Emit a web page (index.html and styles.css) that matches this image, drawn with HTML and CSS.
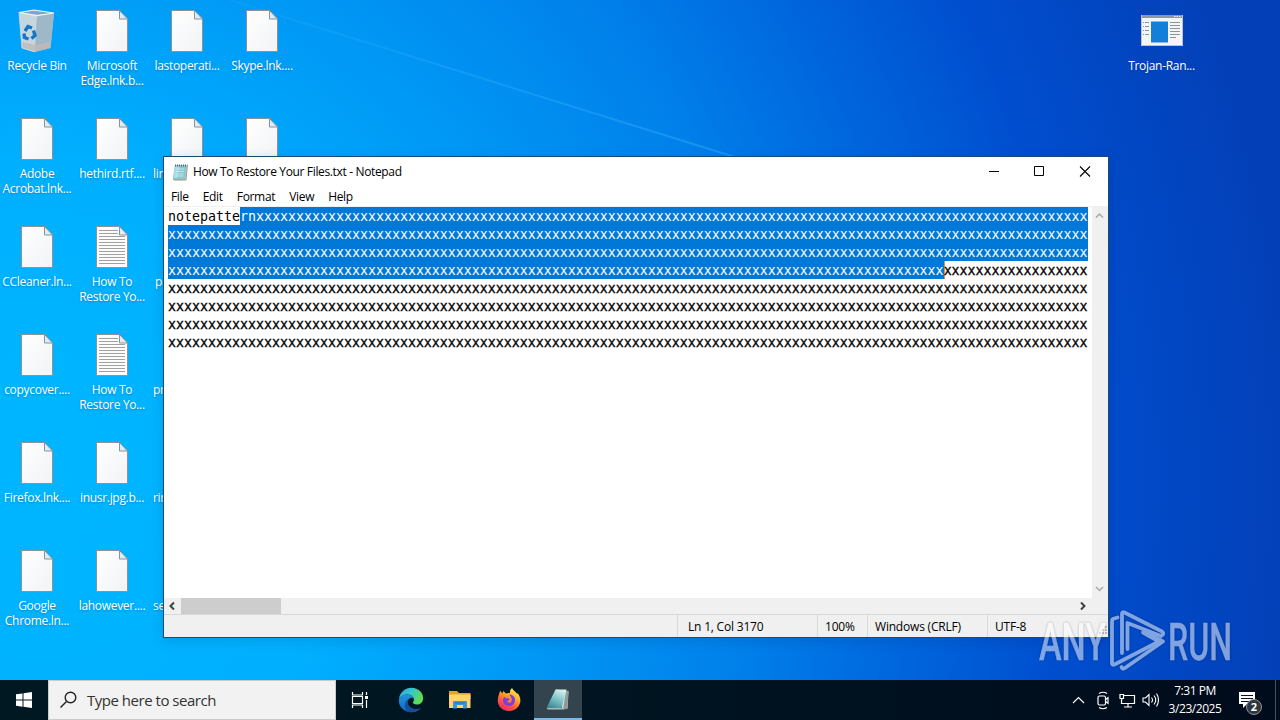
FILE: index.html
```html
<!DOCTYPE html>
<html lang="en">
<head>
<meta charset="utf-8">
<title>Desktop</title>
<link rel="stylesheet" href="styles.css">
</head>
<body>
<svg class="defs" width="0" height="0">
  <defs>
    <linearGradient id="paper" x1="0" y1="0" x2="1" y2="1"><stop offset="0" stop-color="#fff"/><stop offset="1" stop-color="#f1f3f5"/></linearGradient>
    <symbol id="file" viewBox="0 0 32 42">
      <path d="M.5.5h23l8 8.5v32.500H.5z" fill="url(#paper)" stroke="#8d9296"/>
      <path d="M23.500.5v8.500h8z" fill="#d9eefa" stroke="#8d9296"/>
    </symbol>
    <symbol id="textfile" viewBox="0 0 32 42">
      <path d="M.5.5h23l8 8.5v32.500H.5z" fill="#fcfcfc" stroke="#8d9296"/>
      <path d="M3 4.500h19M3 7.500h19M3 10.500h26M3 13.500h26M3 16.500h26M3 19.500h26M3 22.500h26M3 25.500h26M3 28.500h26M3 31.500h26M3 34.500h26M3 37.500h26" stroke="#a0a0a0"/>
      <path d="M23.500.5v8.500h8z" fill="#e3eef6" stroke="#8d9296"/>
    </symbol>
  </defs>
</svg>
<main class="desktop">
  <svg class="rays" viewBox="0 0 1280 680" width="1280" height="680">
    <defs>
      <linearGradient id="ray" x1="230" y1="0" x2="735" y2="157" gradientUnits="userSpaceOnUse"><stop offset="0" stop-color="#4dbcff" stop-opacity=".1"/><stop offset=".5" stop-color="#4dbcff" stop-opacity=".25"/><stop offset="1" stop-color="#3fb0ff" stop-opacity=".4"/></linearGradient>
    </defs>
    <path d="M230 0L735 157" stroke="url(#ray)" stroke-width="2"/>
  </svg>
  <section class="icons">
    <div class="cell">
      <svg class="ico bin" viewBox="0 0 40 44" width="40" height="44">
        <path d="M2 3.500L17 1l20 3-3.500 35L18 43 5 39z" fill="#a9c3d3"/>
        <path d="M2 3.500L20 6.500 18 43 5 39z" fill="#c6d6df"/>
        <path d="M20 6.500L37 4l-3.500 35L18 43z" fill="#9eb8c8"/>
        <path d="M4 3.600L17 1.800 35 4 20 6z" fill="#7fa9c2"/>
        <path d="M4.500 33L18 36l15.500-3.500-.5 6L18 42.500 5.500 38.500z" fill="#c3b9b6" opacity=".8"/>
        <path d="M2 3.500L17 1l20 3-17 2.700z" fill="none" stroke="#e8f5fb" stroke-width="1.200"/>
        <path d="M2 3.500L5 39l13 4" fill="none" stroke="#b8d7e8"/>
        <g fill="none" stroke="#1674c9" stroke-width="3.400"><path d="M8 22l3-4.500 4 1.500"/><path d="M16.500 21.500l1.500 5-3.500 3"/><path d="M11.500 30l-4-1.500-.5-4"/></g>
      </svg>
      <p>Recycle Bin</p>
    </div>
    <div class="cell"><svg class="ico" width="32" height="42"><use href="#file"/></svg><p>Microsoft<br>Edge.lnk.b...</p></div>
    <div class="cell"><svg class="ico" width="32" height="42"><use href="#file"/></svg><p>lastoperati...</p></div>
    <div class="cell"><svg class="ico" width="32" height="42"><use href="#file"/></svg><p>Skype.lnk....</p></div>

    <div class="cell"><svg class="ico" width="32" height="42"><use href="#file"/></svg><p>Adobe<br>Acrobat.lnk...</p></div>
    <div class="cell"><svg class="ico" width="32" height="42"><use href="#file"/></svg><p>hethird.rtf....</p></div>
    <div class="cell"><svg class="ico" width="32" height="42"><use href="#file"/></svg><p class="cut">lin</p></div>
    <div class="cell"><svg class="ico" width="32" height="42"><use href="#file"/></svg></div>

    <div class="cell"><svg class="ico" width="32" height="42"><use href="#file"/></svg><p>CCleaner.ln...</p></div>
    <div class="cell"><svg class="ico" width="32" height="42"><use href="#textfile"/></svg><p>How To<br>Restore Yo...</p></div>
    <div class="cell"><div class="ico blank"></div><p class="cut in">pr</p></div>
    <div class="cell"></div>

    <div class="cell"><svg class="ico" width="32" height="42"><use href="#file"/></svg><p>copycover....</p></div>
    <div class="cell"><svg class="ico" width="32" height="42"><use href="#textfile"/></svg><p>How To<br>Restore Yo...</p></div>
    <div class="cell"><div class="ico blank"></div><p class="cut">pr</p></div>
    <div class="cell"></div>

    <div class="cell"><svg class="ico" width="32" height="42"><use href="#file"/></svg><p>Firefox.lnk....</p></div>
    <div class="cell"><svg class="ico" width="32" height="42"><use href="#file"/></svg><p>inusr.jpg.b...</p></div>
    <div class="cell"><div class="ico blank"></div><p class="cut">rin</p></div>
    <div class="cell"></div>

    <div class="cell"><svg class="ico" width="32" height="42"><use href="#file"/></svg><p>Google<br>Chrome.ln...</p></div>
    <div class="cell"><svg class="ico" width="32" height="42"><use href="#file"/></svg><p>lahowever....</p></div>
    <div class="cell"><div class="ico blank"></div><p class="cut">se</p></div>
    <div class="cell"></div>
  </section>
  <section class="icons right">
    <div class="cell">
      <svg class="ico" viewBox="0 0 42 42" width="42" height="42">
        <path d="M0 5h42v31H0z" fill="#f4f5f5"/><path d="M0 5h42v3H0z" fill="#8e989e"/>
        <path d="M33 6.500h1.500m1 0h1.500m1 0h1.500" stroke="#eee"/>
        <path d="M10 11.500h17v21H10z" fill="#1280d8"/>
        <path d="M4 12.500h4M4 16.500h4M4 20.500h4M4 24.500h4" stroke="#8d9499"/><path d="M2 12.500h1M2 16.500h1M2 20.500h1M2 24.500h1" stroke="#55a0d8"/>
        <path d="M29 12.500h10M29 15.500h10M29 18.500h10M29 21.500h10M29 24.500h10M29 27.500h6" stroke="#8d9499"/>
        <path d="M.5 5v30.500h41V5" fill="none" stroke="#b9c4cc"/>
      </svg>
      <p>Trojan-Ran...</p>
    </div>
  </section>

  <section class="window">
    <header class="titlebar">
      <svg width="16" height="18" viewBox="0 0 16 18">
        <path d="M3 2h12l-1.500 15H.8z" fill="#83bcc9"/><path d="M3 2.500h11.500L13 15.500H1.300z" fill="#a5dbe3"/><path d="M8 3h6.500L13 15.500H5z" fill="#8ac7d2"/>
        <path d="M4.500 6h8M4 8.500h8M3.700 11h8M3.400 13h8" stroke="#d2f0f3" stroke-width=".7"/>
        <path d="M3 2.500h12.500" stroke="#516b72" stroke-width="2" stroke-dasharray="1 1"/><path d="M15.300 3L14 17H2" fill="none" stroke="#a69a83"/>
      </svg>
      <h1>How To Restore Your Files.txt - Notepad</h1>
      <svg class="controls" width="138" height="30" viewBox="0 0 138 30" fill="none" stroke="#000"><path d="M19 14.500h10"/><path d="M64.500 9.500h9v9h-9z"/><path d="M110 9.500l10 10m0-10l-10 10" stroke-width="1.100"/></svg>
    </header>
    <nav class="menu"><span>File</span><span>Edit</span><span>Format</span><span>View</span><span>Help</span></nav>
    <div class="editor">
      <div class="text">
        <div>notepatte<mark>rnxxxxxxxxxxxxxxxxxxxxxxxxxxxxxxxxxxxxxxxxxxxxxxxxxxxxxxxxxxxxxxxxxxxxxxxxxxxxxxxxxxxxxxxxxxxxxxxxxxxxxxxx</mark></div>
        <div><mark>xxxxxxxxxxxxxxxxxxxxxxxxxxxxxxxxxxxxxxxxxxxxxxxxxxxxxxxxxxxxxxxxxxxxxxxxxxxxxxxxxxxxxxxxxxxxxxxxxxxxxxxxxxxxxxxxxxx</mark></div>
        <div><mark>xxxxxxxxxxxxxxxxxxxxxxxxxxxxxxxxxxxxxxxxxxxxxxxxxxxxxxxxxxxxxxxxxxxxxxxxxxxxxxxxxxxxxxxxxxxxxxxxxxxxxxxxxxxxxxxxxxx</mark></div>
        <div><mark class="end">xxxxxxxxxxxxxxxxxxxxxxxxxxxxxxxxxxxxxxxxxxxxxxxxxxxxxxxxxxxxxxxxxxxxxxxxxxxxxxxxxxxxxxxxxxxxxxxxx</mark><b>xxxxxxxxxxxxxxxxxx</b></div>
        <div><b>xxxxxxxxxxxxxxxxxxxxxxxxxxxxxxxxxxxxxxxxxxxxxxxxxxxxxxxxxxxxxxxxxxxxxxxxxxxxxxxxxxxxxxxxxxxxxxxxxxxxxxxxxxxxxxxxxxx</b></div>
        <div><b>xxxxxxxxxxxxxxxxxxxxxxxxxxxxxxxxxxxxxxxxxxxxxxxxxxxxxxxxxxxxxxxxxxxxxxxxxxxxxxxxxxxxxxxxxxxxxxxxxxxxxxxxxxxxxxxxxxx</b></div>
        <div><b>xxxxxxxxxxxxxxxxxxxxxxxxxxxxxxxxxxxxxxxxxxxxxxxxxxxxxxxxxxxxxxxxxxxxxxxxxxxxxxxxxxxxxxxxxxxxxxxxxxxxxxxxxxxxxxxxxxx</b></div>
        <div><b>xxxxxxxxxxxxxxxxxxxxxxxxxxxxxxxxxxxxxxxxxxxxxxxxxxxxxxxxxxxxxxxxxxxxxxxxxxxxxxxxxxxxxxxxxxxxxxxxxxxxxxxxxxxxxxxxxxx</b></div>
      </div>
      <div class="vscroll">
        <svg width="15" height="17" fill="none" stroke="#a8a8a8" stroke-width="1.500"><path d="M4 10.500l3.500-3.500 3.500 3.500"/></svg>
        <svg width="15" height="17" fill="none" stroke="#a8a8a8" stroke-width="1.500"><path d="M4 6l3.500 3.500L11 6"/></svg>
      </div>
    </div>
    <div class="hscroll">
      <svg width="17" height="16" fill="none" stroke="#404040" stroke-width="2"><path d="M10 4.500L6.500 8l3.500 3.500"/></svg>
      <i class="thumb"></i>
      <svg class="next" width="17" height="16" fill="none" stroke="#404040" stroke-width="2"><path d="M7 4.500L10.500 8 7 11.500"/></svg>
    </div>
    <footer class="status"><span class="pos">Ln 1, Col 3170</span><span class="zoom">100%</span><span class="eol">Windows (CRLF)</span><span class="enc">UTF-8</span>
      <svg width="10" height="12" fill="#b5b5b5"><path d="M7 1h2v2H7zM4 4h2v2H4zM7 4h2v2H7zM1 7h2v2H1zM4 7h2v2H4zM7 7h2v2H7z"/></svg>
    </footer>
  </section>

  <svg class="watermark" width="204" height="66" viewBox="0 0 204 66">
    <text x="2" y="50.500" textLength="67" lengthAdjust="spacingAndGlyphs">ANY</text>
    <text x="131" y="50.500" textLength="64" lengthAdjust="spacingAndGlyphs">RUN</text>
    <g fill="none" stroke-width="3.800" stroke-linejoin="round" stroke-linecap="round">
      <path d="M80.500 8.500l-4 1.200q-1.500.5-1.500 2.500V54q0 2.500 2.500 1.500L122 32.500 106 23.500"/>
      <path d="M85 44V5q0-2.500 2.500-1.500L125 22.500q3 2.500-1 4.500L90.500 14V40"/>
      <path d="M110 24l16 8.500L88 59q-3 2-3.500-1"/>
    </g>
  </svg>
</main>
<footer class="taskbar">
  <div class="start"><svg width="16" height="16" fill="#fff"><path d="M0 2.300L6.500 1.400V7.600H0zM7.500 1.200L16 0v7.600H7.500zM0 8.500h6.500v6.200L0 13.800zM7.500 8.500H16V16l-8.500-1.200z"/></svg></div>
  <div class="search"><svg width="18" height="18" fill="none" stroke="#222" stroke-width="1.400"><circle cx="10.500" cy="6.500" r="5.300"/><path d="M6.500 10.500L.5 16.500"/></svg><span>Type here to search</span></div>
  <div class="task view"><svg width="18" height="18" fill="none" stroke="#fff" stroke-width="1.200"><path d="M1.500 1v3h10V1M1.500 5.500h10v7h-10zM1.500 17v-3h10v3M15.500 1v3M15.500 9v8"/><path d="M14 5h3v3h-3z" fill="#fff" stroke="none"/></svg></div>
  <div class="task"><svg width="26" height="26" viewBox="0 0 24 24">
    <defs><linearGradient id="e1" x1="0" y1="0" x2="1" y2=".4"><stop offset="0" stop-color="#2aa8e0"/><stop offset=".5" stop-color="#34c6d0"/><stop offset="1" stop-color="#5fdc50"/></linearGradient><linearGradient id="e2" x1="0" y1="0" x2="0" y2="1"><stop offset="0" stop-color="#1c95de"/><stop offset="1" stop-color="#1565c0"/></linearGradient></defs>
    <path d="M.8 12C1.500 4.500 7 .8 12.300.8 19 .8 23.200 5.500 23.200 10.500c0 3.400-2.700 5.600-5.800 5.600-2.600 0-3.700-1-3.700-1.700 0-.6 1-1 1-2.600C14.700 9 12 7 8.500 7 4.500 7 1.800 9.300.8 12z" fill="url(#e1)"/>
    <path d="M.8 12C1.800 9 4.700 7 8.500 7c3.200 0 5.600 1.700 6.100 3.900-.8-1-2.200-1.300-3.600-.6-2.600 1.300-2.800 5.200-.4 7.800 2.600 2.800 7 3.200 10.400 1-2 2.800-5.200 4.200-8.700 4.200C5.500 23.300.3 18 .8 12z" fill="url(#e2)"/>
    <path d="M9.700 11.300c-4 2-4.500 7.500-1 11.500 5 1.300 9.600-.5 12.300-3.700-3.400 2.200-7.800 1.800-10.400-1-1.800-2-2.200-4.700-.9-6.800z" fill="#124f9e"/>
  </svg></div>
  <div class="task"><svg width="22" height="20" viewBox="0 0 22 20"><path d="M0 1h8l2 2h11.500v6H0z" fill="#e8a21c"/><path d="M0 4.500h21.500V18H0z" fill="#fcd669"/><path d="M4 18.500V12q0-1 1-1h12q1 0 1 1v6.500h-4V15H8v3.500z" fill="#3a96dd"/><path d="M6 13h10" stroke="#2573b8"/></svg></div>
  <div class="task"><svg width="24" height="24" viewBox="0 0 24 24">
    <defs><linearGradient id="f1" x1=".8" y1="0" x2=".25" y2="1"><stop offset="0" stop-color="#fff24a"/><stop offset=".35" stop-color="#ffb02a"/><stop offset=".65" stop-color="#ff5b36"/><stop offset="1" stop-color="#ee2470"/></linearGradient></defs>
    <path d="M1.500 8C2 5.500 3 4 3.300 2.800l2 2.700 1-2.500L9 5.500c1.500-.7 3-.7 4-.4-.4-2 .6-4 2.200-5 .5 2.500 3.800 3.500 5 6 .2-.4.200-.9.100-1.300C24 9 24.500 14.500 21 19c-4 5-12 5.600-17 1C.7 17 0 12 1.500 8z" fill="url(#f1)"/>
    <path d="M12 6.500c4 0 6 2.500 6 5.700 0 3.400-2.600 5.800-6 5.800-3.300 0-6-2.400-6-5.700 0-1.500.6-2.500 1.400-3.300.8 1 2 1.200 3 1.200 1 0 2 .2 2.300.8-.2 1-2 1.500-2.500 2.300-.2 1.200 1.400 2 3 1.400 2-1 2.500-4.200-1.200-8.200z" fill="#7b3fe0"/>
  </svg></div>
  <div class="task active"><svg width="24" height="23" viewBox="0 0 24 23"><defs><linearGradient id="np" x1=".7" y1="0" x2=".2" y2="1"><stop offset="0" stop-color="#d5f0ef"/><stop offset=".6" stop-color="#6db7be"/><stop offset="1" stop-color="#3c848f"/></linearGradient></defs><path d="M10 1.500L22.500 3l-1 17.500-5 1z" fill="#d4dbda"/><path d="M20 3l2.500.4-1 17-4.500 1z" fill="#8f9b99"/><path d="M9.500 1.500h11L15.500 20H.5z" fill="url(#np)"/><path d="M.5 20h15l1 1.500H2z" fill="#a9bcbd"/></svg></div>
  <div class="tray">
    <svg width="88" height="24" viewBox="0 0 88 24" fill="none" stroke="#fff" stroke-width="1.200">
      <path d="M2 15l5.500-5.500L13 15"/>
      <rect x="27" y="8" width="7.500" height="9" rx="1.500"/><path d="M34.500 11.500L37 9.700v5.600l-2.500-1.800M28 5.500q4-2.500 8 0M28 19.500q4 2.500 8 0"/>
      <path d="M53 7.500h10.500v8H50.500v-4M57 15.500v3.500M53 19h8M49 6.500h3.500v4H49zM50.700 10.500v2"/>
      <path d="M72 10h2.500L78 6.500v11L74.500 14H72zM80.500 9.500q2 2.500 0 5M83 7.500q3.500 4.500 0 9M85.500 5.500q4 6.500 0 13" stroke-width="1.100"/>
    </svg>
    <div class="clock"><span>7:31 PM</span><span>3/23/2025</span></div>
    <div class="notice"><svg width="18" height="18"><path d="M1 1h16v12h-8l-4 4v-4H1z" fill="#fff"/><path d="M3 4.500h12M3 7.500h12M3 10.500h8" stroke="#06121f"/></svg><b>2</b></div>
    <i class="peek"></i>
  </div>
</footer>
</body>
</html>
```
FILE: styles.css
```css
* { box-sizing: border-box; }
body { margin: 0; width: 1280px; height: 720px; overflow: hidden; display: flex; flex-direction: column; font: 12px/15px "Open Sans", "Noto Sans", sans-serif; color: #000; }
p, h1 { margin: 0; font: inherit; }
svg { display: block; flex: none; }
.defs { position: absolute; }
.desktop { position: relative; height: 680px; display: flex; justify-content: space-between;
  background: radial-gradient(ellipse 1200px 1250px at 40px 480px, #00b6ff 0%, #00b0ff 25%, #009af6 42%, #0080ea 60%, #0068de 72%, #004ecf 86%, #0340b8 104%); }
.rays { position: absolute; left: 0; top: 0; }
.icons { display: grid; grid-template-columns: repeat(4, 75px); grid-auto-rows: 108px; position: relative; align-content: start; height: 680px; }
.icons.right { grid-template-columns: 75px; margin-right: 81px; }
.cell { display: flex; flex-direction: column; align-items: center; padding: 10px 1px 0 0; }
.right .cell { padding-right: 0; }
.ico { height: 42px; }
.bin { height: 44px; margin: -1px 0 -1px; }
.blank { width: 32px; }
.cell p { margin-top: 6px; text-align: center; color: #fff; white-space: nowrap; letter-spacing: -.3px; text-shadow: 0 1px 2px rgba(0,50,110,.35); }
.cell p.cut { align-self: flex-start; padding-left: 3px; }
.cell p.in { padding-left: 5px; }

.window { position: absolute; left: 163px; top: 156px; width: 946px; height: 482px; border: 1px solid #1c4b70; background: #fff; display: flex; flex-direction: column; box-shadow: 0 3px 12px rgba(0,20,80,.15); }
.titlebar { height: 29px; display: flex; align-items: center; padding-left: 8px; }
.titlebar h1 { margin-left: 5px; letter-spacing: -.35px; }
.controls { margin-left: auto; }
.menu { height: 21px; display: flex; gap: 14px; padding: 3px 0 0 7px; letter-spacing: -.32px; border-bottom: 1px solid #f0f0f0; }
.editor { height: 391px; display: flex; justify-content: space-between; }
.text { width: 924px; padding: 0 0 0 4px; font: 13.290px/19px "DejaVu Sans Mono", monospace; }
.text div { height: 18px; width: 920px; overflow: hidden; display: flex; white-space: pre; }
.text mark { background: #0078d7; color: #fff; height: 18px; }
.text b { font-weight: normal; -webkit-text-stroke: .3px #000; }
.text .end { border-right: 1px solid #f08a3c; margin-right: -1px; }
.vscroll { width: 16px; background: #f0f0f0; display: flex; flex-direction: column; justify-content: space-between; }
.hscroll { height: 16px; background: #f0f0f0; display: flex; }
.thumb { width: 100px; background: #cdcdcd; }
.next { margin-left: auto; margin-right: 17px; }
.status { flex: 1; border-top: 1px solid #d9d9d9; background: #f0f0f0; display: flex; align-items: stretch; padding-left: 513px; line-height: 24px; height: 23px; letter-spacing: -.2px; }
.status span { border-left: 1px solid #d9d9d9; padding-left: 7px; white-space: nowrap; }
.status .pos { width: 140px; padding-left: 10px; }
.status .zoom { width: 50px; }
.status .eol { width: 120px; }
.status .enc { flex: 1; }
.status svg { align-self: flex-end; }

.watermark { position: absolute; left: 1037px; top: 609px; opacity: .5; filter: drop-shadow(0 0 1px rgba(0,0,0,.55)); overflow: visible; }
.watermark text { font: 500 51px "Roboto", sans-serif; fill: #fff; stroke: #fff; stroke-width: .3px; }
.watermark g { stroke: #fff; }

.taskbar { height: 40px; display: flex; color: #fff; background: linear-gradient(90deg, #001821 0%, #001521 45%, #000b1b 100%); }
.start { width: 48px; display: flex; align-items: center; justify-content: center; }
.search { width: 288px; background: #f2f2f2; border: 1px solid #c8cccd; display: flex; align-items: center; padding-left: 11px; color: #333; font-size: 15px; letter-spacing: -.48px; }
.search span { margin-left: 9px; }
.task { width: 49px; display: flex; align-items: center; justify-content: center; }
.task.view { padding-right: 1px; }
.task.active { width: 48px; background: #34444e; border-bottom: 2px solid #76b9ed; margin-left: 2px; }
.task:not(.view):not(.active) { padding-left: 2px; }
.tray { margin-left: auto; display: flex; align-items: center; }
.clock { width: 72px; display: flex; flex-direction: column; align-items: center; line-height: 18px; letter-spacing: -.45px; }
.notice { position: relative; width: 44px; height: 40px; padding: 11px 0 0 7px; }
.notice b { position: absolute; left: 15px; top: 19px; width: 16px; height: 16px; border: 1px solid #8d959c; border-radius: 50%; background: #30363d; font-size: 11px; line-height: 14px; text-align: center; }
.peek { width: 5px; height: 40px; border-left: 1px solid #47515c; }
```
